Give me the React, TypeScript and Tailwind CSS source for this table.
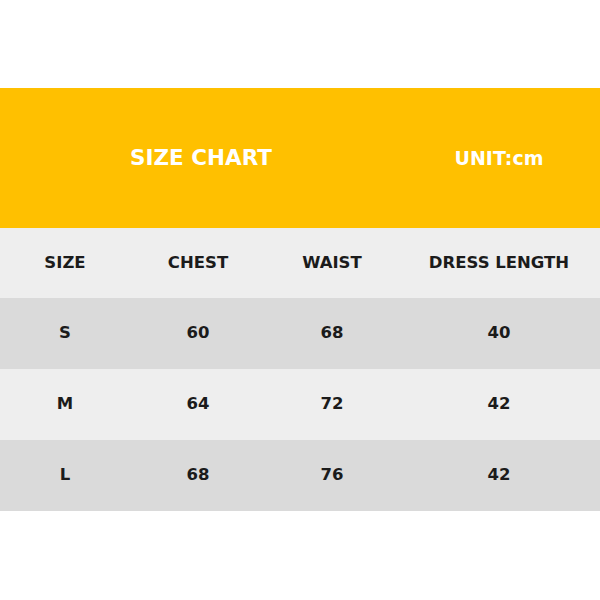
const rows = [
  ["S", "60", "68", "40"],
  ["M", "64", "72", "42"],
  ["L", "68", "76", "42"],
];

const cols = "grid grid-cols-[130px_136px_132px_202px]";

export default function App() {
  return (
    <div className="w-[600px] h-[600px] bg-white font-['DejaVu_Sans',sans-serif] text-[#1b1b1b]">
      <div className="h-[88px]" />
      <div className={`${cols} h-[140px] bg-[#ffc000] items-center text-white font-bold`}>
        <div />
        <div className="text-center text-[21.5px] whitespace-nowrap pr-[5px]">SIZE CHART</div>
        <div />
        <div className="text-center text-[19px] whitespace-nowrap">UNIT:cm</div>
      </div>
      <div className={`${cols} h-[70px] bg-[#eeeeee] items-center text-[16.5px] font-bold`}>
        <div className="text-center">SIZE</div>
        <div className="text-center">CHEST</div>
        <div className="text-center">WAIST</div>
        <div className="text-center whitespace-nowrap">DRESS LENGTH</div>
      </div>
      {rows.map((r, i) => (
        <div
          key={r[0]}
          className={`${cols} h-[71px] items-center text-[16.5px] font-bold ${i % 2 === 0 ? "bg-[#dadada]" : "bg-[#eeeeee]"}`}
        >
          {r.map((c, j) => (
            <div key={j} className="text-center">
              {c}
            </div>
          ))}
        </div>
      ))}
    </div>
  );
}
